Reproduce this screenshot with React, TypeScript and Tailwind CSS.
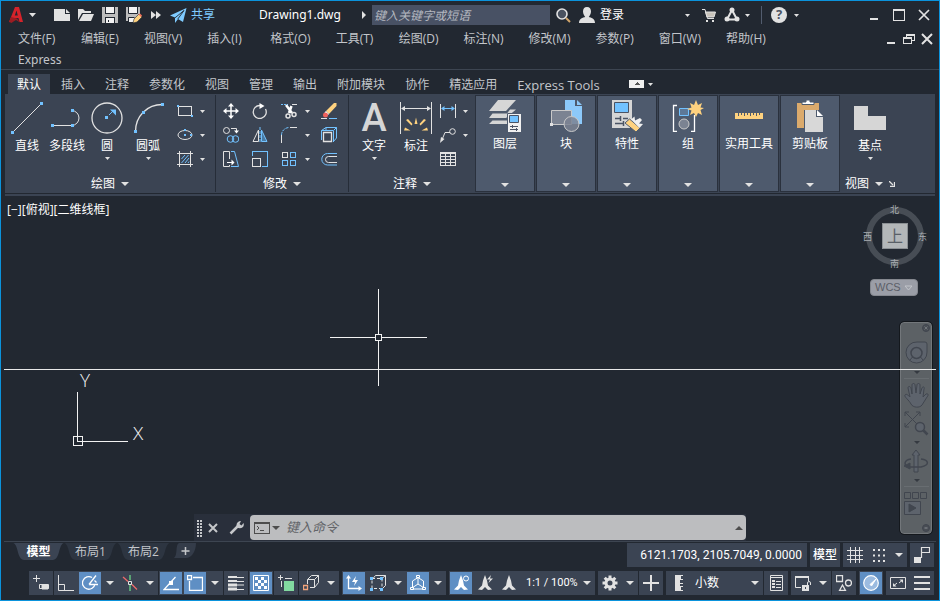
import React from 'react';
import clsx from 'clsx';

const W = '#e2e2e2';
const B = '#72c2ff';
const Y = '#ffd27f';

type IconProps = { w?: number; h?: number; crisp?: boolean; className?: string; children: React.ReactNode };

const Icon: React.FC<IconProps> = ({ w = 16, h = 16, crisp, className, children }) => (
  <svg
    width={w}
    height={h}
    viewBox={`0 0 ${w} ${h}`}
    fill="none"
    stroke={W}
    shapeRendering={crisp ? 'crispEdges' : undefined}
    className={clsx('shrink-0', className)}
    aria-hidden="true"
  >
    {children}
  </svg>
);

const Caret = ({ big }: { big?: boolean }) =>
  big ? (
    <Icon w={8} h={4}><path d="M0 0h8L4 4z" fill={W} stroke="none" /></Icon>
  ) : (
    <Icon w={5} h={3}><path d="M0 0h5L2.5 3z" fill={W} stroke="none" /></Icon>
  );

const Dot = ({ x, y, s = 3 }: { x: number; y: number; s?: number }) => (
  <rect x={x} y={y} width={s} height={s} fill={B} stroke="none" />
);

/* ---------- title bar ---------- */

const menus = [
  '文件(F)', '编辑(E)', '视图(V)', '插入(I)', '格式(O)', '工具(T)', '绘图(D)',
  '标注(N)', '修改(M)', '参数(P)', '窗口(W)', '帮助(H)', 'Express',
];

const quickAccess = [
  {
    label: '新建',
    icon: <Icon><path d="M0 2h11v5h5v7H0z" fill={W} stroke="none" /><path d="M12 2l4 4h-4z" fill={W} stroke="none" /></Icon>,
  },
  {
    label: '打开',
    icon: (
      <Icon>
        <path d="M0 13V2h5l2 2h6v2H4z" fill={W} stroke="none" />
        <path d="M5 7h11l-3 7H1z" fill={W} stroke="none" />
      </Icon>
    ),
  },
  {
    label: '保存',
    icon: (
      <Icon crisp>
        <path d="M0 0h16v16H0z" fill="#bdbdbd" stroke="none" />
        <path d="M4 0h8v6H4zM4 11h8v5H4z" fill="#f2f2f2" stroke="none" />
        <path d="M3.500 0v6.500h9V0M3.500 16v-5.500h9V16M6.500 13v2" stroke="#222831" />
      </Icon>
    ),
  },
  {
    label: '另存为',
    icon: (
      <Icon>
        <path d="M0 0h14v8l-6 6H0z" fill="#bdbdbd" stroke="none" />
        <path d="M3 0h8v6H3zM3 11h5v4H3z" fill="#f2f2f2" stroke="none" />
        <path d="M2.500 0v6.500h9V0M2.500 15v-4.500h6" stroke="#222831" />
        <path d="M7 16l1-4 5-5 3 3-5 5z" fill={Y} stroke="#222831" strokeWidth=".6" />
        <path d="M12.500 7.500l1.500-1 2 2-1 1.500z" fill="#f0705c" stroke="none" />
      </Icon>
    ),
  },
];

const TitleBar = () => (
  <header className="flex h-7 items-center text-white">
    <button aria-label="应用程序菜单" className="flex w-[49px] items-center gap-[6px] pl-2">
      <Icon w={14} h={16}>
        <path d="M6 0h4l4 15h-3.500L9.400 11H5l-2 4.500L0 15z M7.500 3.500L5.800 8.500h3z" fill="#d5232b" fillRule="evenodd" stroke="none" />
        <path d="M0 15l2-5 6 1.500 3 4-4-2.500-4 2.500z" fill="#9c1c22" stroke="none" />
      </Icon>
      <Icon w={8} h={4}><path d="M0 0h7L3.500 4z" fill={W} stroke="none" /></Icon>
    </button>
    {quickAccess.map((q) => (
      <button key={q.label} aria-label={q.label} className="flex w-6 justify-center">{q.icon}</button>
    ))}
    <button aria-label="更多" className="flex w-[20px] justify-center">
      <Icon w={10} h={8}><path d="M0 0l5 4-5 4zM5 0l5 4-5 4z" fill={W} stroke="none" /></Icon>
    </button>
    <button className="ml-1 flex items-center gap-1 text-xs text-[#7fcbff]">
      <Icon w={17} h={15}>
        <path d="M0 7.500L16.500 0 13 14l-5-3-3 4V9.500z" fill="#7fcbff" stroke="none" />
        <path d="M5 9.800L14 2.500 7.800 11" stroke="#222831" strokeWidth=".9" />
      </Icon>
      共享
    </button>
    <h1 className="ml-[44px] w-[103px] font-[Noto_Sans] text-xs leading-5 whitespace-nowrap">Drawing1.dwg</h1>
    <Icon w={4} h={8}><path d="M0 0l4 4-4 4z" fill={W} stroke="none" /></Icon>
    <input
      type="text"
      aria-label="搜索"
      placeholder="键入关键字或短语"
      className="ml-[6px] h-5 w-[178px] bg-[#485164] px-[2px] text-xs italic outline-none placeholder:text-[#b4b8c0]"
    />
    <button aria-label="查找" className="flex w-[26px] justify-center">
      <Icon w={15} h={15}>
        <circle cx="6" cy="6" r="5" fill="#4a5260" strokeWidth="1.600" />
        <path d="M10 10l4 4" stroke="#d2a56b" strokeWidth="2" />
      </Icon>
    </button>
    <button className="flex w-[114px] items-center gap-[5px] pl-[3px] text-xs">
      <Icon>
        <path d="M8 0c2.800 0 4 2 4 4.500S10.500 9 9.800 10c2.200.6 6.200 1.600 6.200 6H0c0-4.400 4-5.400 6.200-6C5.500 9 4 7 4 4.500S5.200 0 8 0z" fill={W} stroke="none" />
      </Icon>
      <span className="grow text-left">登录</span>
      <Caret />
    </button>
    <button aria-label="商店" className="ml-[6px] flex w-[26px] justify-center">
      <Icon w={14} h={15}>
        <path d="M0 1.500h3L5.500 10.500H12" />
        <path d="M3.500 4H13.500L12 9H5z" fill="#c9c4bc" stroke={W} />
        <rect x="4" y="12" width="2" height="2" fill={W} stroke="none" />
        <rect x="10" y="12" width="2" height="2" fill={W} stroke="none" />
      </Icon>
    </button>
    <button aria-label="Autodesk App Store" className="ml-[2px] flex w-[26px] items-center justify-between">
      <Icon>
        <path d="M8 3L3 12.500h10z" strokeWidth="2" />
        <circle cx="8" cy="3" r="2.500" fill={W} stroke="none" />
        <circle cx="3" cy="12" r="2.500" fill={W} stroke="none" />
        <circle cx="13" cy="12" r="2.500" fill={W} stroke="none" />
      </Icon>
      <Caret />
    </button>
    <span className="ml-[11px] h-[18px] w-px bg-[#525c6e]" />
    <button aria-label="帮助" className="ml-[9px] flex items-center gap-[7px]">
      <span className="flex size-4 items-center justify-center rounded-full bg-[#e2e2e2] font-[Noto_Sans] text-[13px] font-bold text-[#4c5463]">?</span>
      <Caret />
    </button>
    <div className="ml-auto flex pr-[3px]">
      <button aria-label="最小化" className="flex w-[25px] justify-center">
        <Icon w={12} h={12}><path d="M2 10h8" strokeWidth="2" /></Icon>
      </button>
      <button aria-label="最大化" className="flex w-[25px] justify-center">
        <Icon w={12} h={12} crisp><path d="M.5 1v10h11V1" /><path d="M0 1h12" strokeWidth="2" /></Icon>
      </button>
      <button aria-label="关闭" className="flex w-[25px] justify-center">
        <Icon w={12} h={12}><path d="M1 1l10 10M11 1L1 11" strokeWidth="1.700" /></Icon>
      </button>
    </div>
  </header>
);

const MenuBar = () => (
  <nav className="flex items-start border-b border-[#3d4551] text-xs leading-[19px] text-[#c3c6cb]">
    <div className="flex flex-1 flex-wrap gap-x-[25px] gap-y-[2px] pr-16 pl-[17px]">
      {menus.map((m) => (
        <button key={m} className={clsx('min-w-[38px] text-left whitespace-nowrap', m === 'Express' && 'font-[Noto_Sans]')}>{m}</button>
      ))}
    </div>
    <div className="flex h-[19px] items-center pr-[3px]">
      <button aria-label="最小化图形" className="flex w-[18px] justify-center">
        <Icon w={12} h={12}><path d="M2 10h8" strokeWidth="2" /></Icon>
      </button>
      <button aria-label="还原图形" className="flex w-[18px] justify-center">
        <Icon w={12} h={12} crisp>
          <path d="M3.500 4V1.500h8v6H9M.5 5.500h8v5h-8z" /><path d="M3 1.500h9M0 5h9" strokeWidth="2" />
        </Icon>
      </button>
      <button aria-label="关闭图形" className="flex w-[18px] justify-center">
        <Icon w={12} h={12}><path d="M1 1l10 10M11 1L1 11" strokeWidth="2" /></Icon>
      </button>
    </div>
  </nav>
);

/* ---------- ribbon ---------- */

const tabs = ['默认', '插入', '注释', '参数化', '视图', '管理', '输出', '附加模块', '协作', '精选应用', 'Express Tools'];

const RibbonTabs = () => (
  <div role="tablist" className="flex items-center gap-[2px] pt-1 pl-[7px] text-xs text-[#c3c6cb]">
    {tabs.map((t, i) => (
      <button
        key={t}
        role="tab"
        aria-selected={i === 0}
        className={clsx(
          'h-5 px-[9px] leading-[22px] whitespace-nowrap',
          i === 0 && 'bg-[#3b4453] text-white',
          t === 'Express Tools' && 'text-[13px]',
        )}
      >
        {t}
      </button>
    ))}
    <button aria-label="最小化功能区" className="ml-[18px] flex items-center gap-1">
      <Icon w={15} h={8} crisp>
        <path d="M0 0h15v8H0z" fill="#f0f0f0" stroke="none" />
        <path d="M5 5l3-3 3 3z" fill="#555" stroke="none" />
      </Icon>
      <Caret />
    </button>
  </div>
);

const BigButton = ({ label, icon, menu, wide }: { label: string; icon: React.ReactNode; menu?: boolean; wide?: boolean }) => (
  <button className={clsx('flex flex-col items-center pt-[7px]', wide ? 'w-[42px]' : 'w-10')}>
    {icon}
    <span className="mt-1 text-xs leading-4 whitespace-nowrap">{label}</span>
    {menu && <span className="mt-[3px]"><Caret /></span>}
  </button>
);

const SmallButton = ({ label, children }: { label: string; children: React.ReactNode }) => (
  <button aria-label={label} className="flex h-6 items-center justify-center">{children}</button>
);

const Panel = ({ title, extra, className, children }: { title: string; extra?: React.ReactNode; className?: string; children: React.ReactNode }) => (
  <section className={clsx('flex flex-col', className)}>
    <div className="flex flex-1">{children}</div>
    <button className="flex h-[18px] items-center justify-center gap-[6px] pt-[2px] text-xs">
      {title}
      <Caret big />
      {extra}
    </button>
  </section>
);

const DrawPanel = () => (
  <Panel title="绘图" className="border-r border-[#262d38] px-[2px]">
    <BigButton
      label="直线"
      icon={<Icon w={32} h={32}><path d="M1.500 30.500L30.500 1.500" /><Dot x={0} y={29} /><Dot x={29} y={0} /></Icon>}
    />
    <BigButton
      label="多段线"
      icon={
        <Icon w={32} h={32}>
          <path d="M1 23.500h19.500M20.500 8.500a7.500 7.500 0 0 1 0 15" />
          <Dot x={0} y={22} /><Dot x={20} y={22} /><Dot x={20} y={7} />
        </Icon>
      }
    />
    <BigButton
      label="圆"
      menu
      icon={
        <Icon w={32} h={32}>
          <circle cx="16" cy="16" r="15" strokeWidth="1.300" />
          <Dot x={14} y={14} />
          <path d="M18 13l5-5" stroke={B} /><path d="M19 7.500h6v6z" fill={B} stroke="none" />
        </Icon>
      }
    />
    <BigButton
      label="圆弧"
      wide
      menu
      icon={
        <Icon w={32} h={32}>
          <path d="M3.500 29.500C3.500 14 15 2.500 30.500 2.500" strokeWidth="1.300" />
          <Dot x={2} y={28} /><Dot x={10} y={9} /><Dot x={29} y={1} />
        </Icon>
      }
    />
    <div className="mr-2 ml-[2px] grid grid-cols-[28px_6px] content-start pt-1">
      <SmallButton label="矩形">
        <Icon crisp><path d="M1.500 3.500h13v9h-13z" /><Dot x={0} y={2} s={2} /><Dot x={14} y={12} s={2} /></Icon>
      </SmallButton>
      <SmallButton label="矩形选项"><Caret /></SmallButton>
      <SmallButton label="椭圆">
        <Icon><ellipse cx="8" cy="8" rx="7" ry="4.500" /><Dot x={7} y={7} s={2} /><Dot x={7} y={2} s={2} /><Dot x={13} y={7} s={2} /></Icon>
      </SmallButton>
      <SmallButton label="椭圆选项"><Caret /></SmallButton>
      <SmallButton label="图案填充">
        <Icon>
          <path d="M2.500 0v16M13.500 0v16M0 2.500h16M0 13.500h16" />
          <path d="M4.500 8L8 4M4.500 12l7-8M8 12l4-5M11 12l1-1.500" stroke={B} />
        </Icon>
      </SmallButton>
      <SmallButton label="图案填充选项"><Caret /></SmallButton>
    </div>
  </Panel>
);

const ModifyPanel = () => (
  <Panel title="修改" className="border-r border-[#262d38]">
    <div className="grid grid-cols-[30px_28px_30px_6px_38px] content-start pt-1">
      <SmallButton label="移动">
        <Icon>
          <path d="M8 2v12M2 8h12" strokeWidth="1.500" stroke="#fff" />
          <path d="M8 0l3 3.500H5zM8 16l3-3.500H5zM0 8l3.500-3v6zM16 8l-3.500-3v6z" fill="#fff" stroke="none" />
        </Icon>
      </SmallButton>
      <SmallButton label="旋转">
        <Icon><path d="M8 2.500A6.500 6.500 0 1 0 13.500 6" strokeWidth="1.300" /><path d="M7.500 0l5 3-5 3z" fill="#fff" stroke="none" /></Icon>
      </SmallButton>
      <SmallButton label="修剪">
        <Icon>
          <path d="M0 1.500h7" stroke={B} strokeDasharray="2 1" /><path d="M11 1.500h5" />
          <path d="M5 2l6 8M10.500 3L8 10" strokeWidth="2.500" stroke="#fff" />
          <circle cx="7" cy="13" r="2" strokeWidth="1.500" /><circle cx="13" cy="11.500" r="2" strokeWidth="1.500" />
        </Icon>
      </SmallButton>
      <SmallButton label="修剪选项"><Caret /></SmallButton>
      <SmallButton label="删除">
        <Icon>
          <path d="M15.500 0v3L8 11 5 8 13 0z" fill={Y} stroke="none" />
          <path d="M5 8l3 3-1.500 1.500-3-3z" fill="#fff" stroke="none" />
          <circle cx="4.500" cy="12" r="2.500" fill="#f0625c" stroke="none" />
          <path d="M0 15.500h6" /><path d="M8 15.500h8" stroke={B} />
        </Icon>
      </SmallButton>

      <SmallButton label="复制">
        <Icon>
          <circle cx="3.500" cy="3.500" r="3" /><path d="M8 1.500h5.500V4" /><path d="M11 3.500h5l-2.500 3z" fill="#fff" stroke="none" />
          <circle cx="7.500" cy="12" r="3.300" stroke={B} /><circle cx="12.500" cy="12" r="3.300" stroke={B} />
        </Icon>
      </SmallButton>
      <SmallButton label="镜像">
        <Icon>
          <path d="M6.500 3v11.500H1z" /><path d="M9.500 3v11.500H15z" stroke={B} fill="#4a7ca5" /><path d="M8 0v16" stroke={B} strokeDasharray="3 1" />
        </Icon>
      </SmallButton>
      <SmallButton label="圆角">
        <Icon><path d="M.5 16V8" /><path d="M.5 8A8 7.500 0 0 1 8 .5" stroke={B} strokeDasharray="3 1" /><path d="M9 .5h7" /></Icon>
      </SmallButton>
      <SmallButton label="圆角选项"><Caret /></SmallButton>
      <SmallButton label="分解">
        <Icon>
          <path d="M2.500 5.500h8v9h-8z" strokeWidth="1.300" />
          <path d="M.5 13V3.500L5 .5h10.500V11L12 15M12.500 4v11M.5 3.500h12L15.500.5M5 .5v3" stroke={B} />
        </Icon>
      </SmallButton>

      <SmallButton label="拉伸">
        <Icon>
          <path d="M6.500 14v1.500h-6V.5h6V8" /><path d="M8 .5h3.500L15.500 15.500H8" stroke={B} />
          <path d="M4 11.500h6" stroke="#fff" /><path d="M8.500 8.500v6l3-3z" fill="#fff" stroke="none" />
        </Icon>
      </SmallButton>
      <SmallButton label="缩放">
        <Icon crisp><path d="M.5 5V.5h15v15H10" stroke={B} /><path d="M.5 7.500h8v8h-8z" /></Icon>
      </SmallButton>
      <SmallButton label="阵列">
        <Icon crisp>
          <path d="M1.500 1.500h5v5h-5z" />
          <path d="M9.500 1.500h5v5h-5zM1.500 9.500h5v5h-5zM9.500 9.500h5v5h-5z" stroke={B} />
        </Icon>
      </SmallButton>
      <SmallButton label="阵列选项"><Caret /></SmallButton>
      <SmallButton label="偏移">
        <Icon>
          <path d="M16 2.500H6.500a5.700 5.700 0 0 0 0 11.500H16" stroke={B} /><path d="M16 5.500H7.500a3 3 0 0 0 0 6H16" />
        </Icon>
      </SmallButton>
    </div>
  </Panel>
);

const AnnotatePanel = () => (
  <Panel title="注释" className="px-[4px]">
    <BigButton
      label="文字"
      wide
      menu
      icon={
        <Icon w={32} h={32} className="overflow-visible">
          <text x="16" y="29" textAnchor="middle" className="font-[Roboto] text-[38px] font-medium" fill="#d6d6d6" stroke="none">A</text>
        </Icon>
      }
    />
    <BigButton
      label="标注"
      wide
      icon={
        <Icon w={32} h={32}>
          <path d="M.5 0v32M31.500 0v32M2 6.500h28" />
          <path d="M1 6.500l4-2.500v5zM31 6.500l-4-2.500v5z" fill={W} stroke="none" />
          <path d="M14.500 22l1.500-6.500 1.500 6.500zM11.500 23.500L6 18l2-1 4.500 5zM20.500 23.500L26 18l-2-1-4.500 5zM10.500 28.500H4l1-3zM21.500 28.500H28l-1-3z" fill={Y} stroke="none" />
        </Icon>
      }
    />
    <div className="grid grid-cols-[22px_12px] content-start pt-1">
      <SmallButton label="线性">
        <Icon>
          <path d="M.5 1v14M15.500 1v14" /><path d="M2 5.500h12" stroke={B} />
          <path d="M1 5.500L4.500 3v5zM15 5.500L11.500 3v5z" fill={B} stroke="none" />
        </Icon>
      </SmallButton>
      <SmallButton label="线性选项"><Caret /></SmallButton>
      <SmallButton label="引线">
        <Icon><path d="M1.500 14L5 5.500h5" /><circle cx="12.500" cy="4.500" r="2.800" /><path d="M0 16l1-6 3.500 2z" fill={W} stroke="none" /></Icon>
      </SmallButton>
      <SmallButton label="引线选项"><Caret /></SmallButton>
      <SmallButton label="表格">
        <Icon crisp><path d="M.5 1.500h15v13H.5zM0 2.500h16M0 5.500h16M0 8.500h16M0 11.500h16M5.500 3v12M10.500 3v12" /></Icon>
      </SmallButton>
    </div>
  </Panel>
);

const collapsed = [
  {
    label: '图层',
    icon: (
      <Icon w={32} h={32}>
        <path d="M9 0h18L17 11H0zM3.500 13.500H18l3-4h6L17 18H0zM3.500 20.500H18v3.500H0z" fill="#d6d6d6" stroke="none" />
        <path d="M18.500 13.500h14v19h-14z" fill="#f0f0f0" stroke="#4e5a6d" />
        <path d="M20.500 15.500h9v7h-9z" fill={B} stroke="#4a5364" />
        <path d="M21 26.500h8M21 29.500h8M23.500 25v3M27.500 28v3" stroke="#4a5364" />
      </Icon>
    ),
  },
  {
    label: '块',
    icon: (
      <Icon w={32} h={32}>
        <path d="M15 0h10v6h7v18H15z" fill="#8cc9fa" stroke="none" /><path d="M27 0l5 5h-5z" fill="#8cc9fa" stroke="none" />
        <path d="M1.500 10.500h20v14h-20z" fill="#7b8392" stroke="#c9c9c9" />
        <circle cx="21.500" cy="24" r="7.500" fill="#7b8392" fillOpacity=".85" stroke="#c9c9c9" />
        <path d="M0 23h3v3H0z" fill={W} stroke="none" />
      </Icon>
    ),
  },
  {
    label: '特性',
    icon: (
      <Icon w={32} h={32}>
        <path d="M1 0h20v28H1z" fill="#d6d6d6" stroke="none" />
        <path d="M3.500 2.500h14v10h-14z" fill={B} stroke="#4a5364" />
        <path d="M4 18.500h5M12 18.500h5M4 23.500h8M9.500 16v5M12.500 21v5" stroke="#4a5364" strokeWidth="1.500" />
        <path d="M14 23l4.500-4L29 28l-4 4z" fill={Y} stroke="#4e5a6d" />
        <path d="M20 19.500l3.500-3 .5 4 5-2.500 2 2-3 3.500 4 .5-3.500 4z" fill="#f0f0f0" stroke="none" />
      </Icon>
    ),
  },
  {
    label: '组',
    icon: (
      <Icon w={32} h={32}>
        <path d="M5 5.500H1.500v26H5M19 31.500h3.500V15" stroke="#fff" strokeWidth="1.300" />
        <path d="M7.500 8.500h9v7h-9z" stroke={B} fill="#5d7897" />
        <circle cx="12" cy="24" r="5" fill="#7b8392" stroke="#c9c9c9" />
        <path d="M24 0l2 5 4-2-1.500 4.500L32 8l-3.500 2L30 15l-4-2-2 4-2-4-4 2 1.500-4.500L15 9l4.500-1.500L18 3l4 2z" fill={Y} stroke="none" />
      </Icon>
    ),
  },
  {
    label: '实用工具',
    icon: (
      <Icon w={32} h={32} crisp>
        <path d="M2 13h28v6H2z" fill={Y} stroke="none" />
        <path d="M5.500 13v3M8.500 13v2M11.500 13v3M14.500 13v2M17.500 13v3M20.500 13v2M23.500 13v3M26.500 13v2" stroke="#4e5a6d" />
      </Icon>
    ),
  },
  {
    label: '剪贴板',
    icon: (
      <Icon w={32} h={32}>
        <path d="M3 3h22v7H10v18H3z" fill="#dbaa6c" stroke="none" />
        <path d="M8 4.500V2h4V0h4v2h4v2.500z" fill="#fff" stroke="#4e5a6d" />
        <path d="M11 10h11v7h7v15H11z" fill="#d8d8d8" stroke="none" /><path d="M23 10l6 6h-6z" fill="#fff" stroke="none" />
      </Icon>
    ),
  },
];

const Ribbon = () => (
  <div className="mx-1 border-b-2 border-[#3b4453]">
    <div className="mb-px flex h-[99px] bg-[#3b4453] py-px text-white">
      <DrawPanel />
      <ModifyPanel />
      <AnnotatePanel />
      <div className="flex gap-px">
        {collapsed.map((c) => (
          <button key={c.label} className="flex w-[60px] flex-col items-center border border-[#2a313d] bg-[#4e5a6d] pt-1 pb-1">
            {c.icon}
            <span className="mt-1 text-xs leading-4 whitespace-nowrap">{c.label}</span>
            <span className="mt-auto"><Caret big /></span>
          </button>
        ))}
      </div>
      <Panel
        title="视图"
        className="pl-[5px]"
        extra={<Icon w={6} h={6}><path d="M0 0l4 4M5.500 1v4.500H1" strokeWidth="1.300" /></Icon>}
      >
        <div className="pl-1">
          <BigButton
            label="基点"
            wide
            menu
            icon={<Icon w={32} h={32} crisp><path d="M0 4h14v10h18v14H0z" fill="#d6d6d6" stroke="none" /></Icon>}
          />
        </div>
      </Panel>
    </div>
  </div>
);

/* ---------- drawing area ---------- */

const ViewCube = () => (
  <div className="absolute top-[7px] right-[9px] text-[9px] leading-none text-[#a9adb2]">
    <div className="relative size-[64px]">
      <Icon w={64} h={64}><circle cx="32" cy="33" r="26" stroke="#474d55" strokeWidth="6" /></Icon>
      <button className="absolute top-[20px] left-[19px] flex size-[26px] items-center justify-center border border-[#8b9094] bg-[#b3b7b9] text-base text-[#596067]">上</button>
      <span className="absolute top-[2px] left-[27px]">北</span>
      <span className="absolute top-[29px] left-0">西</span>
      <span className="absolute top-[29px] right-0">东</span>
      <span className="absolute top-[56px] left-[27px]">南</span>
    </div>
  </div>
);

const NavBar = () => (
  <div className="absolute right-1 bottom-[7px] flex h-[212px] w-8 flex-col items-center rounded-[4px] border border-[#73777b] bg-[#5c6165] text-[#454a52] outline outline-[#14181d]">
    <svg width="30" height="210" viewBox="0 0 30 210" fill="none" stroke="#41464f" aria-hidden="true">
      <circle cx="25" cy="5" r="3.500" fill="#484d54" /><path d="M23.500 3.500l3 3M26.500 3.500l-3 3" stroke="#70757a" />
      <path d="M16 19h8q2 0 2 2v8a10.500 10.500 0 1 1-10-10z" fill="#5d636c" />
      <circle cx="15.500" cy="30" r="5.500" strokeWidth="1.500" /><path d="M11.500 34l-2.500 3M19.500 34l2.500 3" />
      <path d="M13 48h6l-3 3z" fill="#353a41" stroke="none" />
      <path d="M3 55.500h25M3 163.500h25" stroke="#686d71" />
      <path d="M10 81c-2-4-7-7-6-9s4 1 5 2L7 65c0-2 2-2 3 0l1 6V62c0-2 3-2 3 0l1 8 1-8c0-2 3-2 3 0v9l2-6c1-2 3-1 2 1l-1 8 3-3c2-1 3 1 1 3l-5 8c-2 3-9 3-11-1z" fill="#5d636c" />
      <path d="M4 89l15 15M19 89L4 104M4 93v-4h4M15 89h4v4M4 100v4h4" />
      <circle cx="19" cy="104" r="4.500" fill="#5d636c" strokeWidth="1.500" /><path d="M22.500 107.500l4 4" strokeWidth="2.500" />
      <path d="M13 118h6l-3 3zM13 156h6l-3 3z" fill="#353a41" stroke="none" />
      <path d="M13 149v-17h-2l4-5 4 5h-2v17z" fill="#5d636c" />
      <path d="M10 136c-7 1-8 6-2 8M20 136c8 1 9 6 0 8H7" strokeWidth="1.500" /><path d="M3 143l6-3v6z" fill="#41464f" />
      <path d="M3.500 169.500h6v6h-6zM11.500 169.500h6v6h-6zM19.500 169.500h6v6h-6z" />
      <path d="M3.500 178.500h16v13h-16z" fill="#5d636c" /><path d="M8 181v8l7-4z" fill="#41464f" />
      <circle cx="25" cy="205" r="3.500" fill="#484d54" /><path d="M23.500 205h3" stroke="#8a8f94" />
    </svg>
  </div>
);

const CommandLine = () => (
  <div className="absolute right-[190px] bottom-0 left-[190px] flex h-[27px] bg-[#292f3b]">
    <div className="flex w-[56px] items-center pl-[3px]">
      <svg width="6" height="18" viewBox="0 0 6 18" className="text-[#c5c7ca]" aria-hidden="true">
        <path d="M1 1v17M4 1v17" stroke="currentColor" strokeWidth="2" strokeDasharray="2 1" fill="none" />
      </svg>
      <button aria-label="关闭命令行" className="ml-[5px]">
        <Icon w={10} h={10}><path d="M1 1l8 8M9 1L1 9" stroke="#c5c7ca" strokeWidth="2" /></Icon>
      </button>
      <button aria-label="自定义" className="ml-[11px]">
        <Icon w={15} h={15}>
          <path d="M1.500 13.500L9 6" stroke="#c5c7ca" strokeWidth="2.500" />
          <path d="M8 7.500C6.500 4 8.500 1 12 1L10.500 4l2 1.500L14.500 3C16 7 12 9.500 8 7.500z" fill="#c5c7ca" stroke="none" />
        </Icon>
      </button>
    </div>
    <div className="mt-px mb-px flex flex-1 items-center rounded-sm bg-[#bcbdbf] pr-[3px] pl-1">
      <button aria-label="最近使用的命令" className="flex items-center gap-[2px]">
        <Icon w={16} h={12} crisp>
          <path d="M.5 .5h15v11H.5z" stroke="#4d4d4d" /><path d="M0 1.500h16" stroke="#4d4d4d" />
          <path d="M3 4l2 2-2 2M6 8.500h4" stroke="#4d4d4d" />
        </Icon>
        <Icon w={8} h={4}><path d="M0 0h8L4 4z" fill="#4d4d4d" stroke="none" /></Icon>
      </button>
      <input
        type="text"
        aria-label="命令"
        placeholder="键入命令"
        className="ml-[6px] min-w-0 flex-1 bg-transparent text-[13px] italic outline-none placeholder:text-[#626468]"
      />
      <button aria-label="展开历史">
        <Icon w={8} h={4}><path d="M0 4h8L4 0z" fill="#4d4d4d" stroke="none" /></Icon>
      </button>
    </div>
  </div>
);

const Canvas = () => (
  <main className="relative mx-[3px] min-h-[345px] flex-1 overflow-hidden">
    <button className="absolute top-[6px] left-[3px] text-xs leading-4 text-white">[−][俯视][二维线框]</button>
    <svg width="97" height="97" viewBox="0 0 97 97" className="absolute top-[93px] left-[326px]" fill="none" stroke="#f2f2f2" shapeRendering="crispEdges" aria-hidden="true">
      <path d="M48.500 0v45M48.500 52v45M0 48.500h45M52 48.500h45M45.500 45.500h6v6h-6z" />
    </svg>
    <svg width="80" height="76" viewBox="0 0 80 76" className="absolute top-[174px] left-[67px] overflow-visible" fill="none" stroke="#f2f2f2" aria-hidden="true">
      <path d="M6.500 22v49.500M6.500 71.500H57M2.500 66.500h9v9h-9z" shapeRendering="crispEdges" />
      <text x="14" y="17" textAnchor="middle" className="font-[Open_Sans] text-[19px] font-light" fill="#f2f2f2" stroke="none">Y</text>
      <text x="67" y="70" textAnchor="middle" className="font-[Open_Sans] text-[19px] font-light" fill="#f2f2f2" stroke="none">X</text>
    </svg>
    <ViewCube />
    <button className="absolute top-[83px] right-[18px] flex h-[17px] w-[48px] items-center justify-between rounded-[4px] border border-[#85888f] bg-[#9b9ea7] px-1 font-[Liberation_Sans] text-[11px] leading-none text-[#5b5f68]">
      WCS
      <Icon w={9} h={6}><path d="M1 1h7L4.500 5z" stroke="#c2c5ca" /></Icon>
    </button>
    <NavBar />
    <div className="absolute inset-x-0 top-[173px] h-px bg-[#e8e8e8]" />
    <CommandLine />
  </main>
);

/* ---------- layout tabs and status bar ---------- */

const layouts = ['模型', '布局1', '布局2'];

const LayoutTabs = () => (
  <div role="tablist" className="flex items-start pl-[9px] text-xs">
    {layouts.map((l, i) => (
      <button
        key={l}
        role="tab"
        aria-selected={i === 0}
        className={clsx('relative h-[17px] leading-[15px]', i === 0 ? 'w-[51px] font-bold text-white' : 'w-[53px] text-[#c3c6cb]')}
      >
        <svg viewBox="0 0 54 17" preserveAspectRatio="none" className="absolute inset-0 h-full w-full" aria-hidden="true">
          <path d="M0 0h54c-6 1-4 17-12 17H12C4 17 6 1 0 0z" fill={i === 0 ? '#3b4453' : '#2d3541'} />
        </svg>
        <span className="relative">{l}</span>
      </button>
    ))}
    <button aria-label="新建布局" className="ml-1">
      <Icon w={22} h={15}>
        <path d="M5 0h17c0 9-5 15-10 15H0C4 12 1 2 5 0z" fill="#343c49" stroke="none" />
        <path d="M11.500 4v8M7.500 8h8" stroke="#c5c7ca" strokeWidth="1.500" />
      </Icon>
    </button>
  </div>
);

const Group = ({ children }: { children: React.ReactNode }) => (
  <div className="flex h-6 shrink-0 items-center bg-[#3b4453]">{children}</div>
);

const Tool = ({ label, on, children }: { label: string; on?: boolean; children: React.ReactNode }) => (
  <button aria-label={label} aria-pressed={on} className="flex size-6 items-center justify-center">
    <span className={clsx('flex size-[22px] items-center justify-center', on && 'bg-[#5f8fc4]')}>
      <Icon>{children}</Icon>
    </span>
  </button>
);

const Drop = ({ label }: { label: string }) => (
  <button aria-label={label} className="flex h-6 w-4 items-center justify-center"><Caret big /></button>
);

const personPath = 'M8 0l2 5.500 1 5 4 4-4 .5-3-3-3 3-4-.5 4-4 1-5z';

const StatusBar = () => (
  <div className="mt-1 flex justify-end gap-[3px] pr-[2px] text-xs text-white">
    <div className="flex gap-px">
      <Group>
        <Tool label="动态输入"><path d="M3.500 0v7M0 3.500h7M6.500 9.500h9v4h-9z" /><path d="M9 10h6v4H9z" fill={W} /></Tool>
      </Group>
      <Group>
        <Tool label="正交"><path d="M.5 0v15.500H16M.5 9.500h6v6" /></Tool>
        <Tool label="极轴追踪" on>
          <path d="M10 2.500A6.300 6.300 0 1 0 13 9M7 9.500L14 .5M7 9.500h9M12.500 5.500l2 2" stroke="#fff" strokeWidth="1.300" />
        </Tool>
        <Drop label="极轴选项" />
        <Tool label="等轴测草图">
          <path d="M8 0v5M8 10v6" stroke="#6bd685" strokeWidth="1.300" /><path d="M1 2l5 4.500M10 9.500l5 5" stroke="#ee6a6a" strokeWidth="1.300" /><path d="M6.500 6.500h3v3h-3z" />
        </Tool>
        <Drop label="等轴测选项" />
      </Group>
      <Group>
        <Tool label="对象捕捉追踪" on><path d="M16 14.500H1L12.500 2" stroke="#fff" strokeWidth="1.300" /><path d="M6 6h4v4H6z" fill="#fff" stroke="none" /></Tool>
        <Tool label="对象捕捉" on><path d="M6 2.500h9.500v13h-13V6M.5 .5h4v4h-4z" stroke="#fff" strokeWidth="1.300" /></Tool>
        <Drop label="捕捉选项" />
      </Group>
      <Group>
        <Tool label="线宽">
          <path d="M0 2.500h16M8 6.500h8M0 10h16M0 14.500h16" /><path d="M0 6h9M0 2h9" strokeWidth="2" /><path d="M0 10h9M0 14h9" strokeWidth="3" />
        </Tool>
      </Group>
      <Group>
        <Tool label="透明度" on>
          <path d="M.5 .5h15v15H.5z" stroke="#fff" />
          <path d="M2 2h3v3H2zM8 2h3v3H8zM5 5h3v3H5zM11 5h3v3h-3zM2 8h3v3H2zM8 8h3v3H8zM5 11h3v3H5zM11 11h3v3h-3z" fill="#fff" stroke="none" />
        </Tool>
      </Group>
      <Group>
        <Tool label="选择循环">
          <path d="M2.500 0v5M0 2.500h5M3.500 12V6M7 3.500h7" /><path d="M6 6h10v10H6z" fill="#82d9a0" stroke="none" />
        </Tool>
      </Group>
      <Group>
        <Tool label="三维对象捕捉">
          <path d="M4.500 9V4.500l4-4h7v7l-4 5H7M4.500 4.500h7v8M11.500 4.500l4-4" /><path d="M.5 10.500h4v4h-4z" stroke="#f2a47c" strokeWidth="1.300" />
        </Tool>
        <Drop label="三维捕捉选项" />
      </Group>
    </div>
    <Group>
      <Tool label="动态 UCS" on>
        <path d="M2.500 2v11.500H14" stroke="#fff" strokeWidth="1.300" /><path d="M2.500 0L5 3.500H0zM16 13.500L12.500 11v5zM10 1L6 7h3l-1 4 4-6H9z" fill="#fff" stroke="none" />
      </Tool>
      <Tool label="选择过滤">
        <path d="M3 3.500L5.500.5h10v10L12 14M12 3.500l3.500-3" /><path d="M2 3.500h10v10H2z" strokeDasharray="3 2" />
        <Dot x={0} y={2} /><Dot x={10} y={2} /><Dot x={0} y={13} /><Dot x={10} y={13} />
      </Tool>
      <Drop label="过滤选项" />
      <Tool label="小控件" on>
        <path d="M8 2v7M8 9l-6 4M8 9l6 4M2.500 12V6L8 2.500 13.500 6v6M3 14h10" stroke="#fff" />
        <path d="M6.500.5h3v2h-3zM.5 12.500h3v2h-3zM12.500 12.500h3v2h-3z" stroke="#fff" />
      </Tool>
      <Drop label="小控件选项" />
    </Group>
    <Group>
      <Tool label="注释可见性" on><path d={personPath} fill="#fff" stroke="none" /><circle cx="13" cy="3.500" r="2.500" stroke="#fff" /></Tool>
      <Tool label="自动缩放"><path d={personPath} fill={W} stroke="none" /><path d="M14 0l-4 4.500h3L11.500 8 16 3.500h-3z" fill={W} stroke="none" /></Tool>
      <Tool label="注释比例"><path d={personPath} fill={W} stroke="none" /></Tool>
      <label className="flex w-[74px] items-center pr-1 pl-[5px]">
        <select aria-label="注释比例值" className="min-w-0 flex-1 appearance-none bg-transparent font-[Roboto] text-[11px] whitespace-nowrap outline-none">
          <option>1:1 / 100%</option>
        </select>
        <Caret big />
      </label>
    </Group>
    <div className="flex gap-px">
      <Group>
        <Tool label="切换工作空间">
          <circle cx="8" cy="8" r="4" strokeWidth="3" />
          <path d="M8 .5v3M8 12.500v3M.5 8h3M12.500 8h3M2.700 2.700l2 2M11.300 11.300l2 2M13.300 2.700l-2 2M4.700 11.300l-2 2" strokeWidth="3" />
        </Tool>
        <Drop label="工作空间选项" />
      </Group>
      <Group>
        <Tool label="注释监视器"><path d="M8 0v16M0 8h16" strokeWidth="2" /></Tool>
      </Group>
    </div>
    <div className="flex gap-px">
      <Group>
        <label className="flex w-[97px] items-center pr-1 pl-[9px]">
          <Icon w={8} h={16} crisp><path d="M0 0h8v1H6v3h2v1H5v3h3v1H5v2h3v1H6v3h2v1H0z" fill={W} stroke="none" /></Icon>
          <select aria-label="单位" className="ml-3 min-w-0 flex-1 appearance-none bg-transparent text-xs outline-none">
            <option>小数</option>
          </select>
          <Caret big />
        </label>
      </Group>
      <Group>
        <Tool label="快捷特性"><path d="M2.500 .5h12v15h-12zM2 2.500h13" /><path d="M4 6h3M4 9h3M4 12h3" strokeWidth="2" /><path d="M8 6.500h5M8 9.500h5M8 12.500h5" /></Tool>
      </Group>
    </div>
    <div className="flex gap-px">
      <Group>
        <Tool label="锁定用户界面">
          <path d="M6 12.500H.5V1.500h13V6" /><path d="M0 2h14" strokeWidth="2" /><path d="M7 10h7v6H7z" fill={W} stroke="none" /><path d="M12.500 10V8a1.500 1.500 0 0 1 3 0v2" /><path d="M10.500 12v2" stroke="#3b4453" />
        </Tool>
        <Drop label="锁定选项" />
      </Group>
      <Group>
        <Tool label="隔离对象"><path d="M.5 .5h6v6h-6z" strokeWidth="1.300" /><circle cx="12.500" cy="8" r="3" strokeWidth="1.300" /><path d="M6.500 10l3 5.500h-6z" strokeWidth="1.300" /></Tool>
      </Group>
    </div>
    <Group>
      <Tool label="图形性能" on><circle cx="8" cy="8" r="7.300" fill="#9bbbe0" stroke="#fff" strokeWidth="1.200" /><path d="M13 4L7 9.500 8.500 11z" fill="#fff" stroke="#fff" /></Tool>
    </Group>
    <Group>
      <Tool label="全屏显示">
        <path d="M.5 2.500h15v11H.5z" /><path d="M3 8v3.500h3.500zM13 8V4.500H9.500z" fill={W} stroke="none" /><path d="M4 10.500l3-2.500M12 5.500L9 8" />
      </Tool>
      <Tool label="自定义"><path d="M0 2h16M0 8h16M0 14h16" strokeWidth="2" /></Tool>
    </Group>
  </div>
);

const Footer = () => (
  <footer className="mx-[3px] border-t border-[#3d4551] pt-px pb-[5px]">
    <div className="flex justify-between">
      <LayoutTabs />
      <div className="flex gap-[3px] pr-[2px] text-xs text-white">
        <Group>
          <button className="w-[180px] pr-[5px] text-right font-[Roboto] text-xs whitespace-nowrap">6121.1703, 2105.7049, 0.0000</button>
        </Group>
        <Group><button className="w-[30px] font-medium">模型</button></Group>
        <Group>
          <Tool label="栅格"><path d="M3.500 0v16M8.500 0v16M12.500 0v16M0 3.500h16M0 8.500h16M0 12.500h16" /></Tool>
          <Tool label="捕捉模式">
            <path d="M2 3h14M2 8.500h14M2 14h14" strokeWidth="2" strokeDasharray="2 3" />
          </Tool>
          <Drop label="捕捉模式选项" />
        </Group>
        <Group>
          <Tool label="图纸空间"><path d="M0 10h7v6H0z" fill={W} stroke="none" /><path d="M7.500 11V.5h8v5h-8" strokeWidth="1.200" /></Tool>
        </Group>
      </div>
    </div>
    <StatusBar />
  </footer>
);

export default function App() {
  return (
    <div className="flex min-h-screen flex-col border border-[#0b93dc] bg-[#222831] font-['Open_Sans','Noto_Sans_CJK_SC',sans-serif]">
      <TitleBar />
      <MenuBar />
      <RibbonTabs />
      <Ribbon />
      <Canvas />
      <Footer />
    </div>
  );
}
